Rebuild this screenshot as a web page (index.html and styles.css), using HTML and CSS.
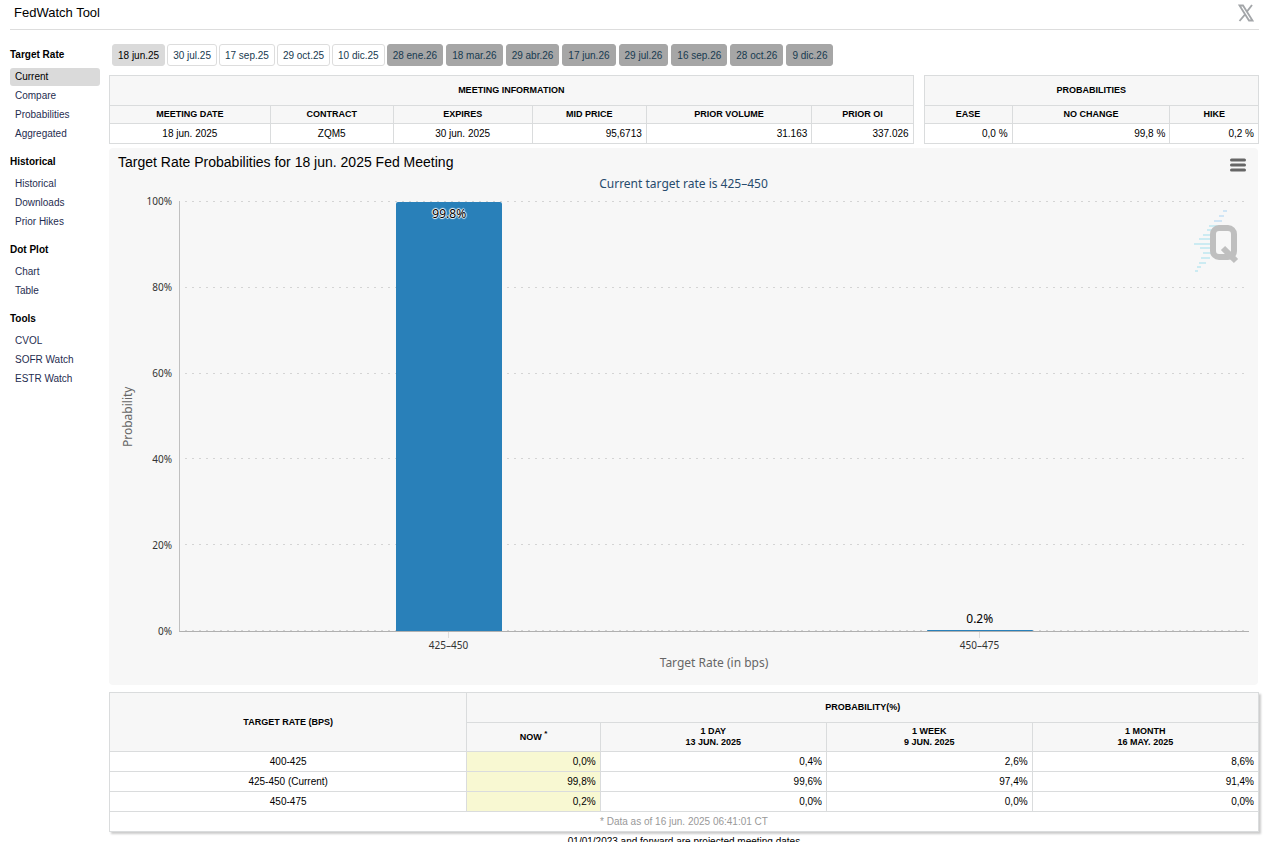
FILE: index.html
```html
<!DOCTYPE html>
<html lang="en">
<head>
  <meta charset="UTF-8">
  <meta name="viewport" content="width=device-width, initial-scale=1.0">
  <title>FedWatch Tool</title>
  <link rel="stylesheet" href="styles.css">
</head>
<body>

<header class="header">
  <h1>FedWatch Tool</h1>
  <a href="#" class="x-link" aria-label="X">
    <svg width="16" height="18" viewBox="0 0 16 18" fill="none" stroke="#a3a6a9">
      <path d="M1.500 1.500h3.500l9.500 15h-3.500z" stroke-width="1.800"/>
      <path d="M14 1L9 7.500M7 10.500L1.500 17" stroke-width="1.900"/>
    </svg>
  </a>
</header>

<div class="layout">
  <nav class="sidebar">
    <h2>Target Rate</h2>
    <ul>
      <li><a href="#" class="active">Current</a></li>
      <li><a href="#">Compare</a></li>
      <li><a href="#">Probabilities</a></li>
      <li><a href="#">Aggregated</a></li>
    </ul>
    <h2>Historical</h2>
    <ul>
      <li><a href="#">Historical</a></li>
      <li><a href="#">Downloads</a></li>
      <li><a href="#">Prior Hikes</a></li>
    </ul>
    <h2>Dot Plot</h2>
    <ul>
      <li><a href="#">Chart</a></li>
      <li><a href="#">Table</a></li>
    </ul>
    <h2>Tools</h2>
    <ul>
      <li><a href="#">CVOL</a></li>
      <li><a href="#">SOFR Watch</a></li>
      <li><a href="#">ESTR Watch</a></li>
    </ul>
  </nav>

  <main class="content">
    <!-- Meeting dates -->
    <div class="tabs">
      <div class="tab-group">
        <button class="tab selected">18 jun.25</button>
        <button class="tab">30 jul.25</button>
        <button class="tab">17 sep.25</button>
        <button class="tab">29 oct.25</button>
        <button class="tab">10 dic.25</button>
      </div>
      <div class="tab-group projected">
        <button class="tab">28 ene.26</button>
        <button class="tab">18 mar.26</button>
        <button class="tab">29 abr.26</button>
        <button class="tab">17 jun.26</button>
        <button class="tab">29 jul.26</button>
        <button class="tab">16 sep.26</button>
        <button class="tab">28 oct.26</button>
        <button class="tab">9 dic.26</button>
      </div>
    </div>

    <div class="info">
      <table class="meeting">
        <colgroup><col class="w20"><col class="w15"><col class="w17"><col class="w14"><col class="w21"><col></colgroup>
        <thead>
          <tr class="title"><th colspan="6">Meeting Information</th></tr>
          <tr><th>Meeting Date</th><th>Contract</th><th>Expires</th><th>Mid Price</th><th>Prior Volume</th><th>Prior OI</th></tr>
        </thead>
        <tbody>
          <tr><td class="center">18 jun. 2025</td><td class="center">ZQM5</td><td class="center">30 jun. 2025</td><td>95,6713</td><td>31.163</td><td>337.026</td></tr>
        </tbody>
      </table>
      <table class="probs">
        <colgroup><col class="w26"><col class="w47"><col></colgroup>
        <thead>
          <tr class="title"><th colspan="3">Probabilities</th></tr>
          <tr><th>Ease</th><th>No Change</th><th>Hike</th></tr>
        </thead>
        <tbody>
          <tr><td>0,0 %</td><td>99,8 %</td><td>0,2 %</td></tr>
        </tbody>
      </table>
    </div>

    <!-- Chart -->
    <section class="chart">
      <div class="chart-head">
        <h2>Target Rate Probabilities for 18 jun. 2025 Fed Meeting</h2>
        <button class="menu" aria-label="Chart menu">
          <svg width="16" height="14" viewBox="0 0 16 14" stroke="#666" stroke-width="3" stroke-linecap="round">
            <path d="M1.500 2h13M1.500 7h13M1.500 12h13"/>
          </svg>
        </button>
      </div>
      <p class="subtitle">Current target rate is 425–450</p>
      <div class="chart-body">
        <div class="y-title">Probability</div>
        <div class="y-labels">
          <span>100%</span><span>80%</span><span>60%</span><span>40%</span><span>20%</span><span>0%</span>
        </div>
        <div class="plot">
          <div class="grid-lines"><i></i><i></i><i></i><i></i><i></i><i></i></div>
          <div class="bars">
            <div class="slot"><div class="bar" style="height: 99.8%"><span class="value inside">99.8%</span></div></div>
            <div class="slot"><span class="value">0.2%</span><div class="bar" style="height: 0.2%"></div></div>
          </div>
          <svg class="watermark" width="46" height="66" viewBox="0 0 46 66" fill="none">
            <g stroke="#c3dff5" stroke-width="1.500">
              <path d="M29 3h4M25 8h5M20 13h8"/>
            </g>
            <g stroke="#bfe8f1" stroke-width="1.500">
              <path d="M15 18h10M13 22h8M9 27h8M5 31h12M0 36h17M6 40h11M9 45h8M7 50h9M5 55h7M3 59h4M1 63h3"/>
            </g>
            <rect x="19" y="20" width="21" height="29" rx="6" stroke="#bfbfbf" stroke-width="6"/>
            <path d="M29 40l13 13" stroke="#bfbfbf" stroke-width="6"/>
          </svg>
        </div>
        <div class="x-labels"><span>425–450</span><span>450–475</span></div>
        <div class="x-title">Target Rate (in bps)</div>
      </div>
    </section>

    <div class="history">
      <table>
        <colgroup><col class="w31"><col class="w12"><col class="w19"><col class="w18"><col></colgroup>
        <thead>
          <tr class="title"><th rowspan="2">Target Rate (bps)</th><th colspan="4">Probability(%)</th></tr>
          <tr class="dates"><th>Now <sup>*</sup></th><th>1 Day<br>13 jun. 2025</th><th>1 Week<br>9 jun. 2025</th><th>1 Month<br>16 may. 2025</th></tr>
        </thead>
        <tbody>
          <tr><td class="center">400-425</td><td class="now">0,0%</td><td>0,4%</td><td>2,6%</td><td>8,6%</td></tr>
          <tr><td class="center">425-450 (Current)</td><td class="now">99,8%</td><td>99,6%</td><td>97,4%</td><td>91,4%</td></tr>
          <tr><td class="center">450-475</td><td class="now">0,2%</td><td>0,0%</td><td>0,0%</td><td>0,0%</td></tr>
          <tr><td class="center asof" colspan="5">* Data as of 16 jun. 2025 06:41:01 CT</td></tr>
        </tbody>
      </table>
    </div>
    <p class="note">01/01/2023 and forward are projected meeting dates</p>
  </main>
</div>

</body>
</html>
```
FILE: styles.css
```css
* {
  box-sizing: border-box;
}

body {
  margin: 0;
  padding: 0 7px 0 10px;
  font-family: "Liberation Sans", Arial, sans-serif;
  font-size: 10px;
  color: #000;
  background-color: #fff;
}

h1, h2, p, ul {
  margin: 0;
  padding: 0;
  font-weight: normal;
}

a {
  color: #1f2d50;
  text-decoration: none;
}

button {
  font-family: inherit;
  font-size: 10px;
  cursor: pointer;
}

.header {
  display: flex;
  justify-content: space-between;
  align-items: center;
  height: 30px;
  padding: 0 5px 4px 4px;
  border-bottom: 1px solid #ddd;
}

.header h1 {
  font-size: 13px;
}

.x-link svg {
  display: block;
}

.layout {
  display: flex;
  gap: 9px;
  padding-top: 14px;
}

/* Sidebar */
.sidebar {
  width: 90px;
  flex-shrink: 0;
}

.sidebar h2 {
  font-size: 10px;
  font-weight: bold;
  line-height: 21px;
  margin-bottom: 3px;
}

.sidebar ul {
  list-style: none;
  margin-bottom: 8px;
}

.sidebar a {
  display: block;
  line-height: 18px;
  margin-bottom: 1px;
  padding-left: 5px;
  border-radius: 3px;
}

.sidebar a.active {
  background-color: #dadada;
  color: #000;
}

.content {
  flex: 1;
  min-width: 0;
}

/* Date tabs */
.tabs, .tab-group {
  display: flex;
  gap: 2px;
}

.tabs {
  padding-left: 3px;
  margin-bottom: 9px;
}

.tab {
  height: 22px;
  padding: 0 5px;
  border: 1px solid #ddd;
  border-radius: 3px;
  background-color: #fff;
  color: #173a50;
  white-space: nowrap;
}

.tab.selected {
  background-color: #dadada;
  border-color: #dadada;
  color: #000;
}

.projected {
  gap: 3px;
}

.projected .tab {
  background-color: #a6a6a6;
  border-color: #a6a6a6;
}

/* Tables */
table {
  width: 100%;
  table-layout: fixed;
  border-collapse: collapse;
}

th, td {
  height: 20px;
  padding: 0 4px;
  border: 1px solid #dadcdd;
  line-height: 11px;
}

th {
  height: 18px;
  background-color: #f7f7f7;
  font-size: 9px;
  text-transform: uppercase;
}

td {
  text-align: right;
  background-color: #fff;
}

.title th {
  height: 30px;
}

.dates th {
  height: 29px;
}

th sup {
  font-size: 8px;
  line-height: 1px;
}

td.center {
  text-align: center;
}

.info {
  display: flex;
  gap: 10px;
  margin-bottom: 4px;
}

.meeting {
  flex: 805;
}

.probs {
  flex: 335;
}

.w12 { width: 11.6%; }
.w14 { width: 14.2%; }
.w15 { width: 15.3%; }
.w17 { width: 17.3%; }
.w18 { width: 17.9%; }
.w19 { width: 19.7%; }
.w20 { width: 20%; }
.w21 { width: 20.6%; }
.w26 { width: 26.3%; }
.w31 { width: 31.1%; }
.w47 { width: 47.2%; }

/* Chart */
.chart {
  margin-right: 1px;
  padding: 5px 9px 10px;
  border-radius: 4px;
  background-color: #f7f7f7;
  font-family: "Noto Sans", "Open Sans", sans-serif;
}

.chart-head {
  display: flex;
  justify-content: space-between;
  align-items: center;
  height: 18px;
  padding-right: 3px;
}

.chart-head h2 {
  font-family: "Liberation Sans", Arial, sans-serif;
  font-size: 14px;
}

.menu {
  padding: 0;
  border: none;
  background: none;
}

.menu svg {
  display: block;
  margin-top: 5px;
}

.subtitle {
  margin-top: 1px;
  font-size: 12px;
  line-height: 24px;
  text-align: center;
  color: #274b6d;
}

.chart-body {
  display: grid;
  grid-template-columns: 20px 27px 1fr;
  grid-template-rows: 431px 25px 18px;
  column-gap: 7px;
  margin-top: 5px;
}

.y-title {
  writing-mode: vertical-rl;
  transform: rotate(180deg);
  text-align: center;
  font-size: 12px;
  line-height: 20px;
  color: #666;
}

.y-labels {
  display: flex;
  flex-direction: column;
  justify-content: space-between;
  align-items: flex-end;
  margin: -7px 0;
  line-height: 15px;
  color: #333;
}

.plot {
  display: grid;
  position: relative;
  border-left: 1px solid #c0c0c0;
  border-bottom: 1px solid #b0b0b0;
}

.grid-lines, .bars {
  grid-area: 1 / 1;
}

.grid-lines {
  display: flex;
  flex-direction: column;
  justify-content: space-between;
}

.grid-lines i {
  height: 1px;
  background: repeating-linear-gradient(to right, transparent 0 5px, #d4d4d4 5px 7px);
}

.bars {
  display: flex;
  padding: 0 4px;
}

.slot {
  flex: 1;
  display: flex;
  flex-direction: column;
  justify-content: flex-end;
  align-items: center;
}

.bar {
  flex-shrink: 0;
  width: 20%;
  min-height: 1px;
  border-radius: 2px 2px 0 0;
  background-color: #2980b9;
  text-align: center;
}

.value {
  font-size: 12px;
  line-height: 23px;
}

.value.inside {
  text-shadow: -1px 0 1px #fff, 1px 0 1px #fff, 0 -1px 1px #fff, 0 1px 1px #fff;
}

.watermark {
  position: absolute;
  top: 7px;
  right: 9px;
}

.x-labels, .x-title {
  grid-column: 3;
  text-align: center;
}

.x-labels {
  display: flex;
  padding: 0 4px;
  line-height: 14px;
  color: #333;
}

.x-labels span {
  flex: 1;
}

/* tick mark */
.x-labels span::before {
  content: "";
  display: block;
  width: 1px;
  height: 6px;
  margin: 0 auto;
  background-color: #dcdcdc;
}

.x-title {
  font-size: 12px;
  line-height: 11px;
  color: #666;
}

/* Probability history */
.history {
  margin-top: 7px;
  box-shadow: 2px 2px 2px #ccc;
}

td.now {
  background-color: #f8f8d2;
}

td.asof {
  color: #999;
}

.note {
  margin-top: 4px;
  text-align: center;
}
```
